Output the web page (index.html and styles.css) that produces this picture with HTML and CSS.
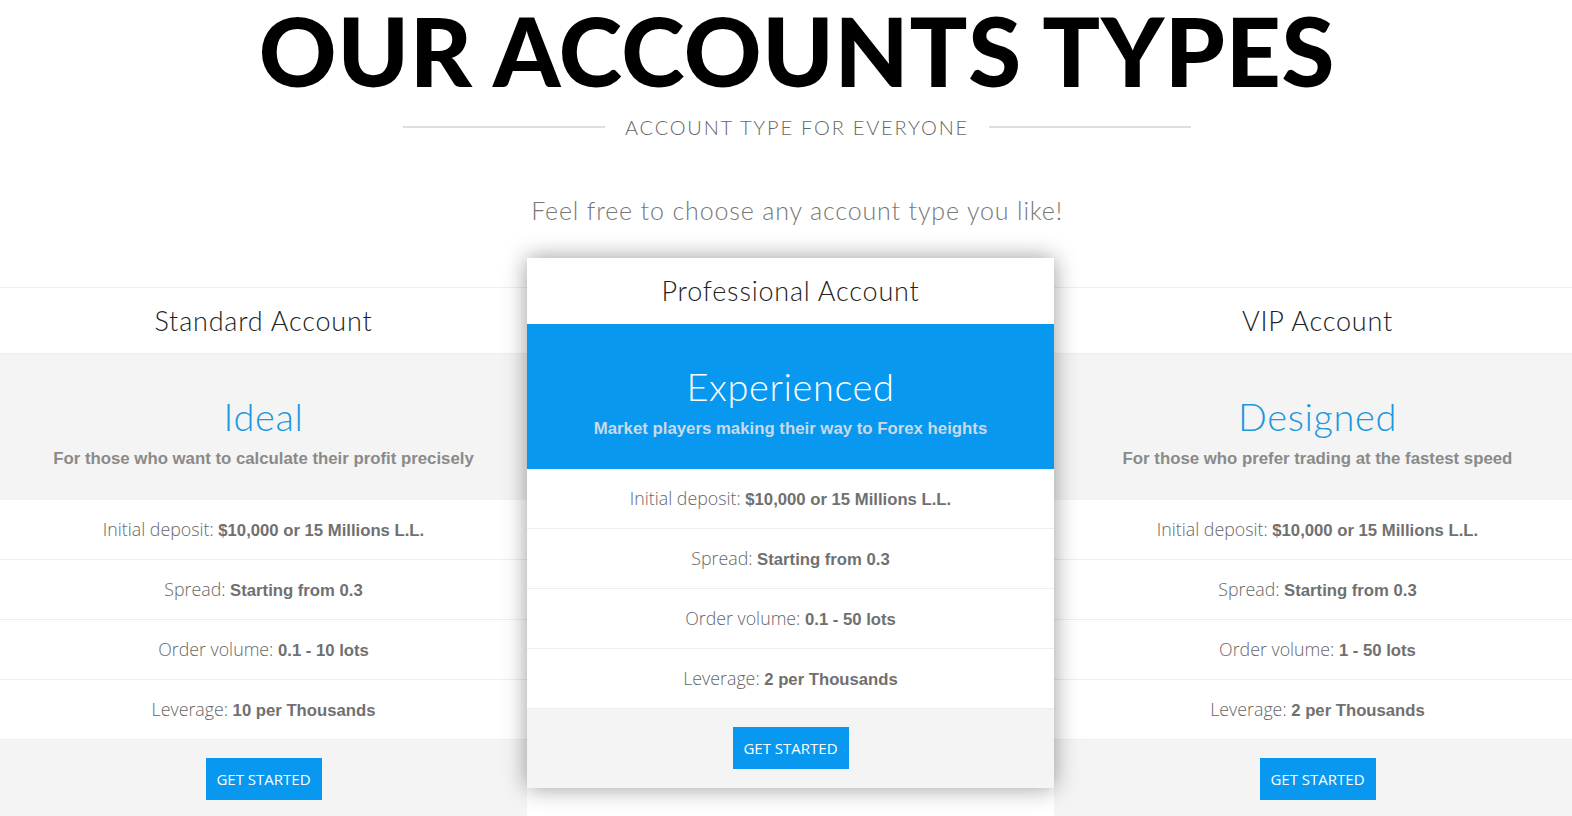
FILE: index.html
```html
<!DOCTYPE html>
<html lang="en">
<head>
    <meta charset="UTF-8">
    <meta name="viewport" content="width=device-width, initial-scale=1.0">
    <title>Our Accounts Types</title>
    <link rel="stylesheet" href="styles.css">
</head>
<body>
    <div class="section-head">
        <h1 class="page-title">OUR ACCOUNTS TYPES</h1>
        <div class="tagline">
            <span class="rule"></span>
            <span class="tagline-text">ACCOUNT TYPE FOR EVERYONE</span>
            <span class="rule"></span>
        </div>
        <p class="intro">Feel free to choose any account type you like!</p>
    </div>

    <div class="plans">
        <div class="plan">
            <div class="plan-name">Standard Account</div>
            <div class="plan-hero">
                <div class="plan-title">Ideal</div>
                <div class="plan-desc">For those who want to calculate their profit precisely</div>
            </div>
            <ul class="plan-rows">
                <li>Initial deposit: <b>$10,000 or 15 Millions L.L.</b></li>
                <li>Spread: <b>Starting from 0.3</b></li>
                <li>Order volume: <b>0.1 - 10 lots</b></li>
                <li>Leverage: <b>10 per Thousands</b></li>
            </ul>
            <div class="plan-foot"><button class="btn">GET STARTED</button></div>
        </div>

        <div class="plan plan-featured">
            <div class="plan-name">Professional Account</div>
            <div class="plan-hero">
                <div class="plan-title">Experienced</div>
                <div class="plan-desc">Market players making their way to Forex heights</div>
            </div>
            <ul class="plan-rows">
                <li>Initial deposit: <b>$10,000 or 15 Millions L.L.</b></li>
                <li>Spread: <b>Starting from 0.3</b></li>
                <li>Order volume: <b>0.1 - 50 lots</b></li>
                <li>Leverage: <b>2 per Thousands</b></li>
            </ul>
            <div class="plan-foot"><button class="btn">GET STARTED</button></div>
        </div>

        <div class="plan">
            <div class="plan-name">VIP Account</div>
            <div class="plan-hero">
                <div class="plan-title">Designed</div>
                <div class="plan-desc">For those who prefer trading at the fastest speed</div>
            </div>
            <ul class="plan-rows">
                <li>Initial deposit: <b>$10,000 or 15 Millions L.L.</b></li>
                <li>Spread: <b>Starting from 0.3</b></li>
                <li>Order volume: <b>1 - 50 lots</b></li>
                <li>Leverage: <b>2 per Thousands</b></li>
            </ul>
            <div class="plan-foot"><button class="btn">GET STARTED</button></div>
        </div>
    </div>
</body>
</html>
```

FILE: styles.css
```css
body {
    margin: 0;
    padding: 0;
    background: #ffffff;
    font-family: Lato, "Liberation Sans", sans-serif;
    overflow: hidden;
}

.section-head {
    padding-left: 22px;
    text-align: center;
}

.page-title {
    margin: 0;
    padding-top: 2px;
    font-size: 96px;
    line-height: 96px;
    font-weight: 900;
    letter-spacing: 0.7px;
    color: #000;
}

.tagline {
    display: flex;
    justify-content: center;
    align-items: center;
    gap: 20px;
    margin-top: 17px;
    height: 24px;
}

.rule {
    width: 202px;
    height: 2px;
    background-color: #dedede;
}

.tagline-text {
    font-size: 20px;
    font-weight: 300;
    letter-spacing: 1.8px;
    color: #666;
}

.intro {
    margin: 56px 0 0;
    font-size: 25px;
    line-height: 30px;
    font-weight: 300;
    letter-spacing: 0.85px;
    color: #777;
}

.plans {
    display: grid;
    grid-template-columns: repeat(3, 527px);
    align-items: start;
    margin-top: 33px;
}

.plan {
    margin-top: 29px;
    background-color: #fff;
    text-align: center;
}

.plan-name {
    height: 65px;
    line-height: 65px;
    border-top: 1px solid #eee;
    font-size: 27px;
    font-weight: 300;
    letter-spacing: 0.8px;
    color: #222;
}

.plan-hero {
    height: 147px;
    box-sizing: border-box;
    padding-top: 38px;
    background-color: #f4f4f4;
    border-top: 1px solid #eee;
}

.plan-title {
    font-size: 38px;
    line-height: 48px;
    font-weight: 300;
    letter-spacing: 0.6px;
    color: #1b98de;
}

.plan-desc {
    margin-top: 9px;
    font-family: "Liberation Sans", Arial, sans-serif;
    font-size: 16.8px;
    line-height: 20px;
    font-weight: 700;
    color: #8a8a8a;
}

.plan-rows {
    list-style: none;
    margin: 0;
    padding: 0;
}

.plan-rows li {
    height: 59px;
    line-height: 59px;
    border-top: 1px solid #eee;
    font-family: "Open Sans", sans-serif;
    font-size: 17.8px;
    font-weight: 300;
    color: #666;
}

.plan-rows li:first-child {
    border-top: none;
}

.plan-rows b {
    font-family: "Liberation Sans", Arial, sans-serif;
    font-size: 16.7px;
    font-weight: 700;
    color: #707070;
}

.plan-foot {
    padding: 18px 0 19px;
    background-color: #f4f4f4;
    border-top: 1px solid #eee;
}

.btn {
    width: 116px;
    height: 42px;
    border: none;
    background-color: #0898f0;
    color: #fff;
    font-family: "Open Sans", sans-serif;
    font-size: 15px;
    cursor: pointer;
}

.plan-featured {
    margin-top: 0;
    position: relative;
    z-index: 1;
    box-shadow: 0 0 22px rgba(0, 0, 0, 0.4);
}

.plan-featured .plan-name {
    height: 66px;
    line-height: 66px;
    border-top: none;
}

.plan-featured .plan-hero {
    height: 145px;
    background-color: #0898f0;
    border-top: none;
}

.plan-featured .plan-title {
    color: #fff;
}

.plan-featured .plan-desc {
    color: #c9d9e8;
}
```
